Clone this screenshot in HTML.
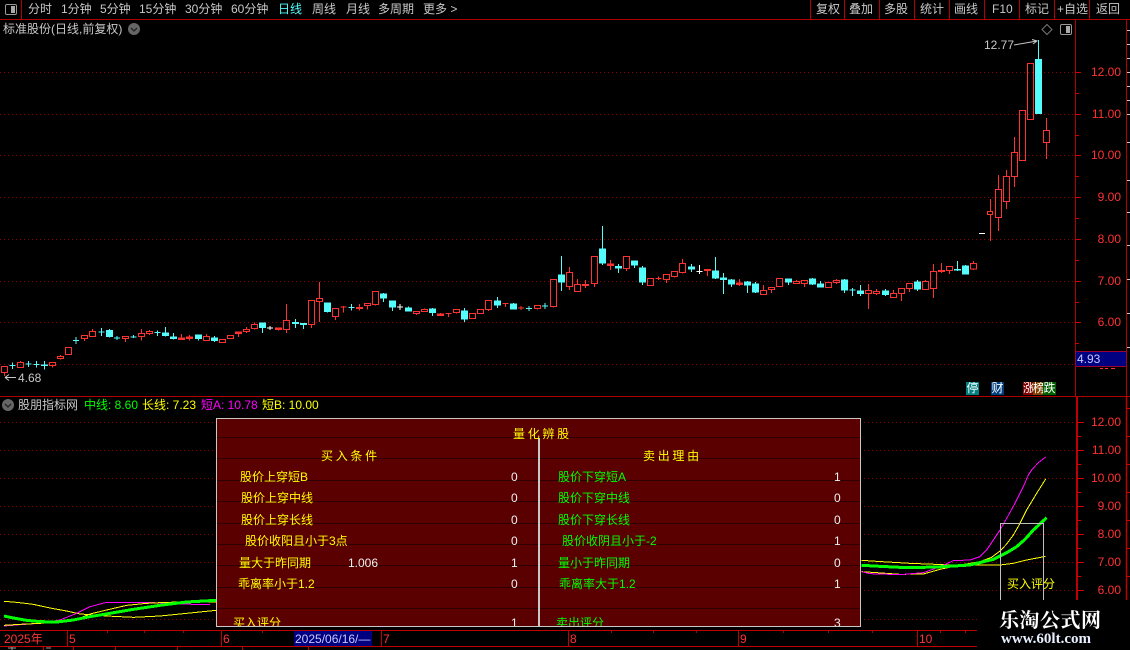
<!DOCTYPE html>
<html lang="zh">
<head>
<meta charset="utf-8">
<title>股票K线</title>
<style>
html,body{margin:0;padding:0;background:#000;}
#r{position:relative;width:1130px;height:650px;overflow:hidden;background:#000;font-family:"Liberation Sans","WenQuanYi Zen Hei","Noto Sans CJK SC",sans-serif;font-size:12px;color:#c8c8c8;}
svg{position:absolute;left:0;top:0;}
.t{position:absolute;white-space:nowrap;line-height:14px;height:14px;}
.ax{color:#ff3232;width:40px;text-align:right;left:1081px;}
.tm{color:#ff3232;}
.b{position:absolute;top:382px;height:13px;line-height:13px;text-align:center;color:#fff;overflow:hidden;}
#p{position:absolute;left:216px;top:418px;width:643px;height:207px;background:#5a0000;border:1.5px solid #c8c8c8;overflow:hidden;}
#p .t{margin-left:-217px;margin-top:-419px;}
.l{position:absolute;left:0;right:0;height:1px;background:#2e0000;}
.y{color:#ffff00;}
.g{color:#00ff00;}
.w{color:#f0f0f0;}
.s{letter-spacing:2.7px;}
</style>
</head>
<body>
<div id="r">
<svg width="1130" height="650" viewBox="0 0 1130 650" fill="none">
<!-- toolbar lines -->
<path d="M0 19.5H1130M21.5 0V19M810.5 0V19M844.5 0V19M879.5 0V19M914.5 0V19M949.5 0V19M984.5 0V19M1019.5 0V19M1054.5 0V19M1089.5 0V19" stroke="#b00000"/>
<rect x="5.5" y="4.5" width="11" height="10" rx="1.5" stroke="#999"/><rect x="11" y="6" width="4" height="7" fill="#aaa"/>
<circle cx="134" cy="29" r="6" fill="#666"/><path d="M131 28l3 3 3-3" stroke="#222" stroke-width="1.3"/>
<path d="M1047 24.5l5 5-5 5-5-5z" stroke="#777"/>
<rect x="1060.5" y="24.5" width="11" height="10" rx="1.5" stroke="#999"/><rect x="1066" y="26" width="4" height="7" fill="#aaa"/>
<!-- dotted grid -->
<g stroke="#8c0000" stroke-dasharray="1 3" shape-rendering="crispEdges">
<path d="M0 72.5H1075M0 114.5H1075M0 155.5H1075M0 197.5H1075M0 239.5H1075M0 281.5H1075M0 322.5H1075M0 364.5H1075"/>
<path d="M0 422.5H1075M0 450.5H1075M0 478.5H1075M0 506.5H1075M0 534.5H1075M0 562.5H1075M0 590.5H1075M0 619.5H978"/>
</g>
<!-- axes -->
<path d="M1075.5 19V396M0 396.5H1130M1126.5 19V396" stroke="#b00000"/>
<path d="M1075 72.5h6M1075 114.5h6M1075 155.5h6M1075 197.5h6M1075 239.5h6M1075 281.5h6M1075 322.5h6M1075 93.5h4M1075 135.5h4M1075 176.5h4M1075 218.5h4M1075 260.5h4M1075 302.5h4M1075 343.5h4" stroke="#d00000"/>
<path d="M1127 30.5h3M1127 44.5h3M1127 58.5h3M1127 72.5h3M1127 86.5h3M1127 100.5h3M1127 114.5h3M1127 142.5h3M1127 180.5h3M1127 212.5h3M1127 245.5h3M1127 279.5h3M1127 313.5h3M1127 347.5h3" stroke="#c8c8c8"/>
<path d="M1077 397V600" stroke="#c00000" stroke-width="2"/>
<path d="M1126.5 397V600" stroke="#c00000" stroke-width="1.5"/>
<path d="M1077 422.5h7M1077 450.5h7M1077 478.5h7M1077 506.5h7M1077 534.5h7M1077 562.5h7M1077 590.5h7M1077 436.5h4M1077 464.5h4M1077 492.5h4M1077 520.5h4M1077 548.5h4M1077 576.5h4M1127 408.5h3M1127 436.5h3M1127 464.5h3M1127 492.5h3M1127 520.5h3M1127 548.5h3M1127 576.5h3" stroke="#d00000"/>
<!-- blue price box -->
<rect x="1075.5" y="351.5" width="51" height="15" fill="#000080" stroke="#a00030"/>
<path d="M1100 368.5h3M1105 368.5h3M1111 368.5h4" stroke="#ff3232"/>
<!-- candles -->
<g shape-rendering="crispEdges" stroke-width="3">
<g transform="translate(0 220) scale(.33334)">
<path stroke="#ff3232" d="M4 440h18v18h-18zM13 458v10M52 427h18v15h-18zM61 423v4M148 428h18v8h-18zM157 436v7M172 409h18v7h-18zM181 405v4M181 416v3M196 382h18v22h-18zM244 346h18v10h-18zM253 356v7M268 334h18v16h-18zM277 327v7M367 349h18v7h-18zM376 356v10M415 340h18v10h-18zM424 327v13M424 350v12M439 334h18v7h-18zM448 330v4M448 341v4M610 349h18v12h-18zM619 342v7M658 358h18v10h-18zM682 346h18v10h-18zM730 328h18v7h-18zM739 321v7M739 335v4M754 313h18v13h-18zM763 308v5M763 326v3M850 301h18v27h-18zM859 252v49M859 328v11M925 241h18v73h-18zM934 314v10M949 235h18v10h-18zM958 186v49M958 245v61"/>
<path stroke="#ff3232" fill="#ff3232" d="M535 354h18v4h-18zM544 342v12M544 358v1M559 351h18v4h-18zM568 345v6M568 355v7M706 336h18v4h-18zM715 340v11M826 324h18v4h-18zM835 328v4"/>
<path stroke="#54fcfc" fill="#54fcfc" d="M319 331h18v19h-18zM328 327v4M328 350v3M487 339h18v8h-18zM496 321v18M496 347v3M511 351h18v5h-18zM520 339v12M520 356v3M586 345h18v11h-18zM595 356v6M634 354h18v8h-18zM643 348v6M643 362v4M778 309h18v14h-18zM787 323v16M877 307h18v4h-18zM886 297v10M886 311v13M901 310h18v4h-18zM910 314v13M973 249h18v26h-18zM982 275v3M28 436h18M37 427v20M76 432h18M85 423v18M100 433h18M109 423v20M124 435h18v1h-18zM133 423v26M219 361h18M228 351v21M295 336h18M304 324v24M342 354h18M351 348v12M391 351h18M400 345v9M463 337h18M472 331v17"/>
<path stroke="#fff" d="M801 324h18M810 318v12"/>
</g>
<g transform="translate(330 220) scale(.33334)">
<path stroke="#ff3232" d="M7 265h18v25h-18zM16 290v10M103 250h18v7h-18zM112 257v12M127 214h18v40h-18zM136 254v3M250 274h18v7h-18zM259 281v4M274 268h18v7h-18zM283 265v3M370 268h18v10h-18zM379 278v3M418 280h18v16h-18zM442 268h18v13h-18zM466 241h18v28h-18zM475 269v4M613 256h18v10h-18zM622 266v3M661 178h18v82h-18zM670 260v3M709 157h18v43h-18zM718 141v16M718 200v10M733 193h18v22h-18zM742 177v16M784 109h18v82h-18zM793 191v10M880 109h18v37h-18zM889 146v7M952 175h18v22h-18z"/>
<path stroke="#ff3232" fill="#ff3232" d="M31 261h18M40 258v20M79 262h18v4h-18zM88 252v10M88 266v6M322 282h18v5h-18zM331 279v3M346 280h18M355 280v11M517 250h18M526 250v11M564 264h18M573 258v12M757 193h18v4h-18zM766 180v13M766 197v7M832 132h18v4h-18zM841 120v12M841 136v14M976 175h18M985 170v10"/>
<path stroke="#54fcfc" fill="#54fcfc" d="M151 222h18v12h-18zM160 219v3M160 234v12M178 243h18v18h-18zM187 261v12M226 264h18v9h-18zM235 259v5M298 267h18v11h-18zM307 264v3M307 278v10M394 273h18v24h-18zM403 264v9M403 297v9M493 243h18v12h-18zM502 231v12M502 255v9M541 252h18v15h-18zM550 249v3M685 165h18v21h-18zM694 108v57M694 186v27M808 87h18v42h-18zM817 18v69M817 129v6M856 139h18v5h-18zM865 132v7M865 144v15M904 123h18v12h-18zM913 135v9M928 144h18v42h-18zM937 138v6M937 186v9M55 262h18M64 252v20M588 265h18M597 258v15M636 258h18M645 249v18"/>
<path stroke="#fff" d="M201 261h18M210 252v18"/>
</g>
<g transform="translate(660 220) scale(.33334)">
<path stroke="#ff3232" d="M10 163h18v16h-18zM19 179v10M34 154h18v16h-18zM43 170v3M58 130h18v27h-18zM67 117v13M67 157v3M301 211h18v13h-18zM310 195v16M325 202h18v7h-18zM334 209v10M349 175h18v25h-18zM400 184h18v7h-18zM409 180v4M424 181h18v10h-18zM433 191v10M496 187h18v16h-18zM520 181h18v7h-18zM529 177v4M529 188v4M616 211h18v9h-18zM625 192v19M625 220v47M640 214h18v6h-18zM649 207v7M649 220v5M691 220h18v13h-18zM700 210v10M715 205h18v16h-18zM724 221v22M739 190h18v16h-18zM748 206v10M787 184h18v25h-18zM796 180v4M811 154h18v52h-18zM820 132v22M820 206v28M859 139h18v13h-18zM868 152v10M931 130h18v17h-18zM940 123v7M940 147v3"/>
<path stroke="#ff3232" fill="#ff3232" d="M133 148h18v4h-18zM142 152v16M229 189h18v4h-18zM238 177v12M238 193v5M835 151h18v4h-18zM844 129v22M844 155v4"/>
<path stroke="#54fcfc" fill="#54fcfc" d="M85 141h18v6h-18zM94 132v9M94 147v9M157 153h18v21h-18zM166 111v42M166 174v3M181 174h18v5h-18zM190 159v15M190 179v43M205 180h18v12h-18zM214 177v3M214 192v9M253 186h18v9h-18zM262 183v3M262 195v24M277 192h18v24h-18zM286 186v6M286 216v3M376 177h18v9h-18zM385 186v9M448 177h18v15h-18zM457 174v3M457 192v3M472 192h18v9h-18zM481 183v9M544 180h18v30h-18zM553 177v3M553 210v9M592 213h18v8h-18zM601 195v18M601 221v7M667 213h18v11h-18zM676 207v6M676 224v4M763 186h18v21h-18zM772 180v6M772 207v6M883 148h18v2h-18zM892 123v25M892 150v3M907 138h18v24h-18zM916 135v3M568 210h18M577 204v24"/>
<path stroke="#fff" d="M109 154h18M118 135v27"/>
</g>
<g stroke-width="1">
<path stroke="#fff" d="M979 233.5h6"/>
<path stroke="#ff3232" d="M987.5 211.5h5v3h-5zM990.5 199v12M990.5 215v26M995.5 189.5h6v28h-6zM998.5 175v14M998.5 218v13M1003.5 176.5h6v25h-6zM1006.5 170v6M1006.5 202v7M1011.5 152.5h6v24h-6zM1014.5 137v15M1014.5 177v10M1019.5 110.5h6v50h-6zM1027.5 63.5h6v56h-6zM1043.5 130.5h6v12h-6zM1046.5 118v12M1046.5 143v16"/>
<path stroke="#54fcfc" d="M1038.5 40V59"/>
<rect x="1035" y="59" width="7" height="55" fill="#54fcfc"/>
</g>
</g>
<!-- price arrows -->
<path d="M1014 45l23-4M1032 39.5l5 1.5-4 3" stroke="#c8c8c8"/>
<path d="M16 377.5H5M5 377.5l4-3M5 377.5l4 3" stroke="#c8c8c8"/>
<!-- indicator header icon -->
<circle cx="8" cy="405" r="6" fill="#666"/><path d="M5 404l3 3 3-3" stroke="#222" stroke-width="1.3"/>
<!-- indicator lines left -->
<g transform="translate(0 590) scale(.33334)" stroke-width="3" shape-rendering="crispEdges">
<path stroke="#ffff00" d="M12 34L50 37 100 43 150 54 200 63 240 72 270 74 320 78 400 82 480 78 560 70 648 61"/>
<path stroke="#ff00ff" d="M12 108L60 104 120 100 180 90 230 70 270 50 320 37 390 37 440 37 500 40 580 43 630 43"/>
<path stroke="#ffff00" d="M12 106L60 103 120 100 180 96 230 88 270 72 320 60 380 46 440 40 500 37 560 36 648 36"/>
<path stroke="#00ff00" stroke-width="9" d="M12 78L40 84 80 91 120 95 170 96 220 90 270 80 330 70 400 58 480 46 560 36 648 31"/>
</g>
<!-- indicator lines right -->
<g transform="translate(860 450) scale(.33334)" stroke-width="3" shape-rendering="crispEdges">
<path stroke="#ffff00" d="M5 331L50 334 100 337 150 340 200 342 280 345 420 345 460 340 500 330 557 319"/>
<path stroke="#ffff00" d="M5 365L50 368 120 373 190 372 240 358 300 345 360 335 395 322 420 303 440 282 460 255 480 220 500 180 530 130 557 87"/>
<path stroke="#ff00ff" d="M5 365L30 371 120 374 190 368 240 350 280 332 330 330 360 320 380 300 400 270 420 240 440 205 465 160 490 110 505 75 515 60 535 38 557 21"/>
<path stroke="#00ff00" stroke-width="9" d="M5 346L60 349 120 352 190 352 250 350 330 345 400 328 440 308 470 290 495 268 520 240 560 203"/>
</g>
<path d="M1000.5 600V523.5H1043.5V600" stroke="#c0c0c0"/>
<!-- time axis -->
<rect x="978" y="600" width="152" height="50" fill="#000"/>
<rect x="0" y="630" width="977" height="20" fill="#000"/>
<path d="M0 630.5H977M0 646.5H977M67.5 630V646M221.5 630V646M381.5 630V646M568.5 630V646M738.5 630V646M917.5 630V646M43.5 646V650M73.5 646V650M115.5 646V650M177.5 646V650M242.5 646V650M308.5 646V650M107.5 630v3M144.5 630v3M183.5 630v3M262.5 630v3M611.5 630v3M653.5 630v3M696.5 630v3M783.5 630v3M828.5 630v3M872.5 630v3M940.5 630v3M965.5 630v3" stroke="#c00000"/>
<rect x="294" y="631" width="78" height="15" fill="#000080"/>
<path d="M8 648h8M12 647v3M46 648h5" stroke="#999"/>
</svg>

<!-- toolbar -->
<span class="t" style="left:28px;top:2px">分时</span>
<span class="t" style="left:61px;top:2px">1分钟</span>
<span class="t" style="left:100px;top:2px">5分钟</span>
<span class="t" style="left:139px;top:2px">15分钟</span>
<span class="t" style="left:185px;top:2px">30分钟</span>
<span class="t" style="left:231px;top:2px">60分钟</span>
<span class="t" style="left:278px;top:2px;color:#54fcfc">日线</span>
<span class="t" style="left:312px;top:2px">周线</span>
<span class="t" style="left:346px;top:2px">月线</span>
<span class="t" style="left:378px;top:2px">多周期</span>
<span class="t" style="left:423px;top:2px">更多 &gt;</span>
<span class="t" style="left:816px;top:2px">复权</span>
<span class="t" style="left:849px;top:2px">叠加</span>
<span class="t" style="left:884px;top:2px">多股</span>
<span class="t" style="left:920px;top:2px">统计</span>
<span class="t" style="left:954px;top:2px">画线</span>
<span class="t" style="left:992px;top:2px">F10</span>
<span class="t" style="left:1025px;top:2px">标记</span>
<span class="t" style="left:1057px;top:2px">+自选</span>
<span class="t" style="left:1096px;top:2px">返回</span>
<span class="t" style="left:3px;top:22px">标准股份(日线,前复权)</span>

<!-- price labels -->
<span class="t" style="left:984px;top:38px">12.77</span>
<span class="t" style="left:18px;top:371px">4.68</span>
<span class="t ax" style="top:65px">12.00</span>
<span class="t ax" style="top:107px">11.00</span>
<span class="t ax" style="top:148px">10.00</span>
<span class="t ax" style="top:190px">9.00</span>
<span class="t ax" style="top:232px">8.00</span>
<span class="t ax" style="top:274px">7.00</span>
<span class="t ax" style="top:315px">6.00</span>
<span class="t" style="left:1077px;top:352px;color:#c8c8ff">4.93</span>

<!-- badges -->
<span class="b" style="left:966px;width:13px;background:#008080">停</span>
<span class="b" style="left:991px;width:13px;background:#004080">财</span>
<span class="b" style="left:1023px;width:10px;background:#800000">涨</span>
<span class="b" style="left:1033px;width:10px;background:#804000">榜</span>
<span class="b" style="left:1043px;width:13px;background:#006000">跌</span>

<!-- indicator header -->
<span class="t" style="left:18px;top:398px">股朋指标网</span>
<span class="t g" style="left:84px;top:398px">中线: 8.60</span>
<span class="t y" style="left:142px;top:398px">长线: 7.23</span>
<span class="t" style="left:201px;top:398px;color:#ff00ff">短A: 10.78</span>
<span class="t y" style="left:262px;top:398px">短B: 10.00</span>

<!-- lower axis labels -->
<span class="t ax" style="top:415px">12.00</span>
<span class="t ax" style="top:443px">11.00</span>
<span class="t ax" style="top:471px">10.00</span>
<span class="t ax" style="top:499px">9.00</span>
<span class="t ax" style="top:527px">8.00</span>
<span class="t ax" style="top:555px">7.00</span>
<span class="t ax" style="top:583px">6.00</span>
<span class="t y" style="left:1007px;top:577px">买入评分</span>

<!-- time axis -->
<span class="t tm" style="left:4px;top:632px">2025年</span>
<span class="t tm" style="left:69px;top:632px">5</span>
<span class="t tm" style="left:223px;top:632px">6</span>
<span class="t" style="left:295px;top:632px;color:#c8c8ff">2025/06/16/—</span>
<span class="t tm" style="left:383px;top:632px">7</span>
<span class="t tm" style="left:570px;top:632px">8</span>
<span class="t tm" style="left:740px;top:632px">9</span>
<span class="t tm" style="left:919px;top:632px">10</span>

<!-- panel -->
<div id="p">
<i class="l" style="top:18px"></i><i class="l" style="top:39px"></i><i class="l" style="top:61px"></i><i class="l" style="top:82px"></i><i class="l" style="top:104px"></i><i class="l" style="top:125px"></i><i class="l" style="top:146px"></i><i class="l" style="top:168px"></i><i class="l" style="top:189px"></i>
<i style="position:absolute;left:321px;top:19px;width:2px;height:190px;background:#c8c8c8"></i>
<span class="t y s" style="left:513px;top:427px">量化辨股</span>
<span class="t y s" style="left:321px;top:449px">买入条件</span>
<span class="t y s" style="left:643px;top:449px">卖出理由</span>

<span class="t y" style="left:240px;top:470px">股价上穿短B</span>
<span class="t y" style="left:241px;top:491px">股价上穿中线</span>
<span class="t y" style="left:241px;top:513px">股价上穿长线</span>
<span class="t y" style="left:245px;top:534px">股价收阳且小于3点</span>
<span class="t y" style="left:239px;top:556px">量大于昨同期</span>
<span class="t w" style="left:348px;top:556px">1.006</span>
<span class="t y" style="left:238px;top:577px">乖离率小于1.2</span>
<span class="t y" style="left:233px;top:616px">买入评分</span>
<span class="t w" style="left:511px;top:470px">0</span>
<span class="t w" style="left:511px;top:491px">0</span>
<span class="t w" style="left:511px;top:513px">0</span>
<span class="t w" style="left:511px;top:534px">0</span>
<span class="t w" style="left:511px;top:556px">1</span>
<span class="t w" style="left:511px;top:577px">0</span>
<span class="t w" style="left:511px;top:616px">1</span>

<span class="t g" style="left:558px;top:470px">股价下穿短A</span>
<span class="t g" style="left:558px;top:491px">股价下穿中线</span>
<span class="t g" style="left:558px;top:513px">股价下穿长线</span>
<span class="t g" style="left:562px;top:534px">股价收阴且小于-2</span>
<span class="t g" style="left:558px;top:556px">量小于昨同期</span>
<span class="t g" style="left:559px;top:577px">乖离率大于1.2</span>
<span class="t g" style="left:556px;top:616px">卖出评分</span>
<span class="t w" style="left:834px;top:470px">1</span>
<span class="t w" style="left:834px;top:491px">0</span>
<span class="t w" style="left:834px;top:513px">0</span>
<span class="t w" style="left:834px;top:534px">1</span>
<span class="t w" style="left:834px;top:556px">0</span>
<span class="t w" style="left:834px;top:577px">1</span>
<span class="t w" style="left:834px;top:616px">3</span>
</div>

<!-- watermark -->
<span class="t" style="left:999px;top:607px;height:24px;line-height:24px;font-family:'Noto Serif CJK SC','Liberation Serif',serif;font-weight:700;font-size:20px;letter-spacing:.5px;color:#fff">乐淘公式网</span>
<span class="t" style="left:1001px;top:632px;line-height:14px;font-family:'Liberation Serif',serif;font-weight:700;font-size:15px;color:#e8f0ff">www.60lt.com</span>
</div>
</body>
</html>
